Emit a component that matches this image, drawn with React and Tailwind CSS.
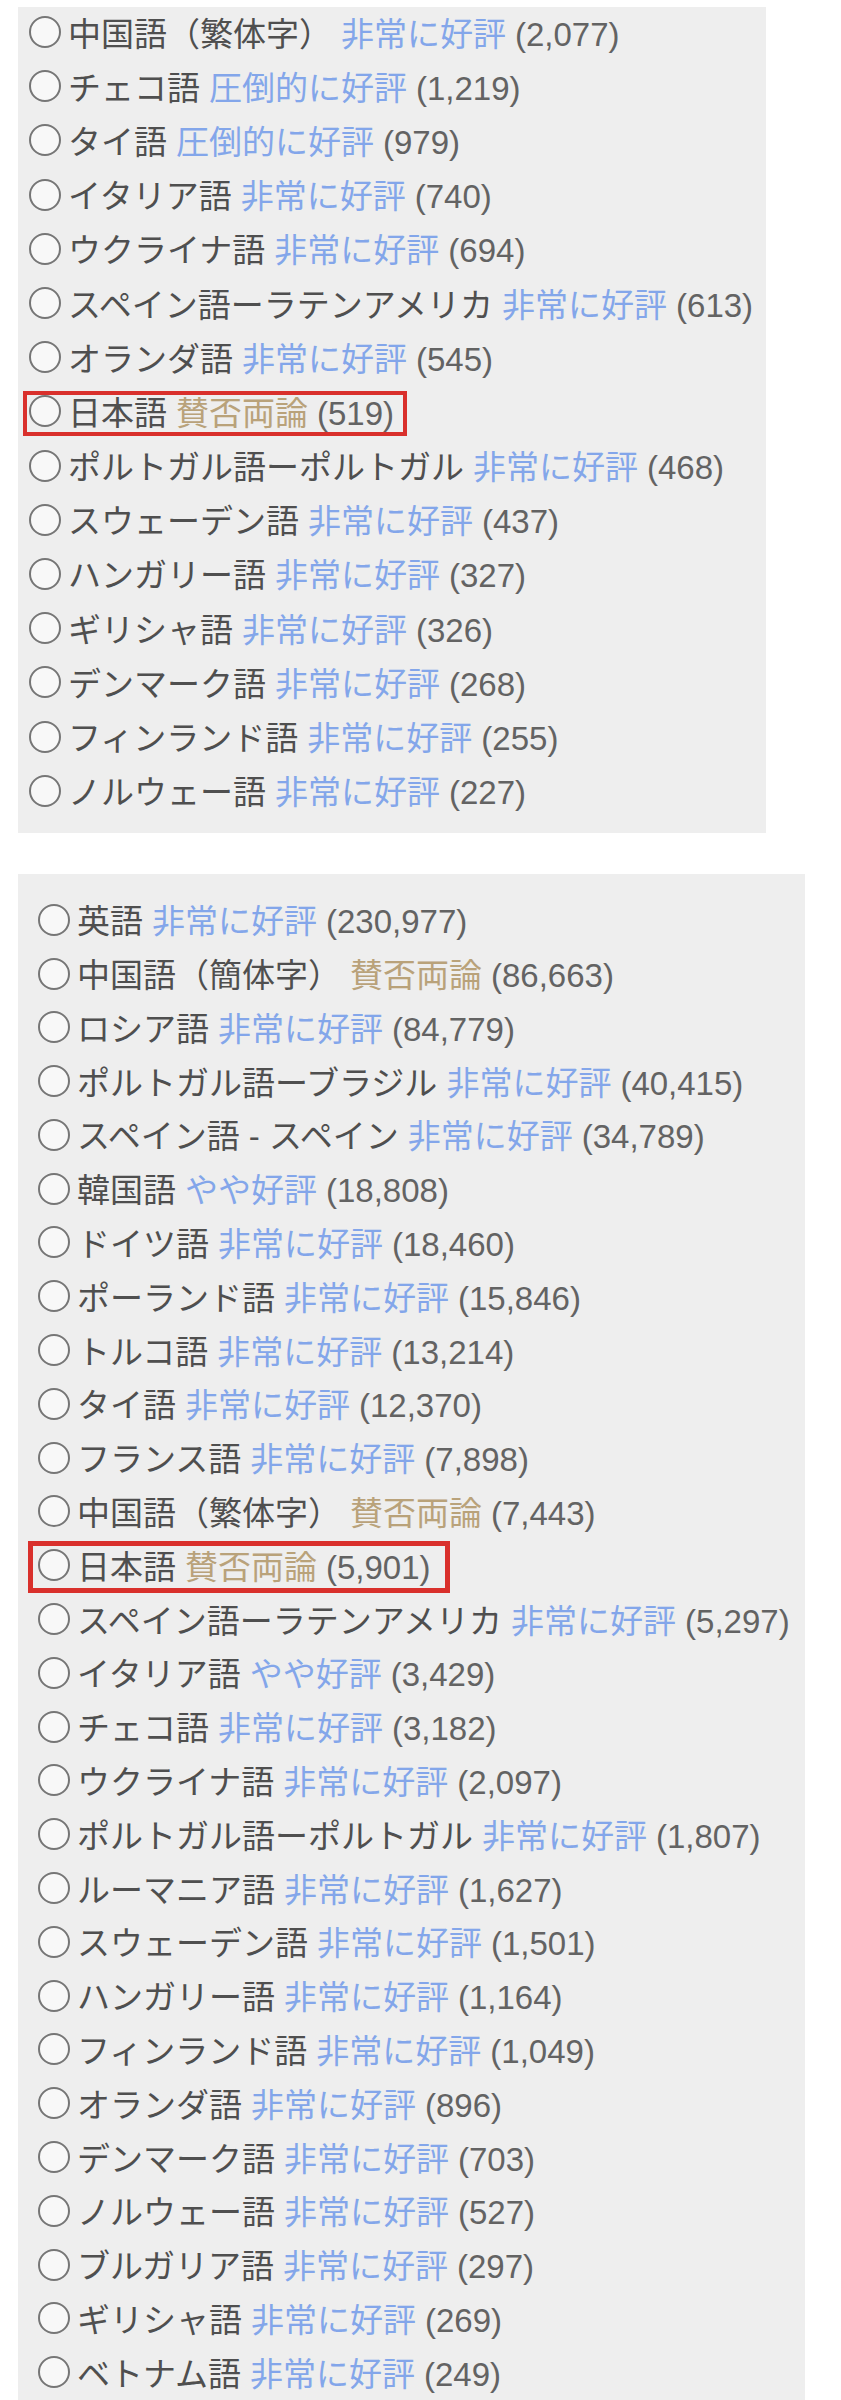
const BLUE = 'text-[#83a6ea]'
const MIXED = 'text-[#b9a27a]'

const topList = [
  ['中国語（繁体字）', '非常に好評', '2,077'],
  ['チェコ語', '圧倒的に好評', '1,219'],
  ['タイ語', '圧倒的に好評', '979'],
  ['イタリア語', '非常に好評', '740'],
  ['ウクライナ語', '非常に好評', '694'],
  ['スペイン語ーラテンアメリカ', '非常に好評', '613'],
  ['オランダ語', '非常に好評', '545'],
  ['日本語', '賛否両論', '519', true],
  ['ポルトガル語ーポルトガル', '非常に好評', '468'],
  ['スウェーデン語', '非常に好評', '437'],
  ['ハンガリー語', '非常に好評', '327'],
  ['ギリシャ語', '非常に好評', '326'],
  ['デンマーク語', '非常に好評', '268'],
  ['フィンランド語', '非常に好評', '255'],
  ['ノルウェー語', '非常に好評', '227'],
]

const bottomList = [
  ['英語', '非常に好評', '230,977'],
  ['中国語（簡体字）', '賛否両論', '86,663'],
  ['ロシア語', '非常に好評', '84,779'],
  ['ポルトガル語ーブラジル', '非常に好評', '40,415'],
  ['スペイン語 - スペイン', '非常に好評', '34,789'],
  ['韓国語', 'やや好評', '18,808'],
  ['ドイツ語', '非常に好評', '18,460'],
  ['ポーランド語', '非常に好評', '15,846'],
  ['トルコ語', '非常に好評', '13,214'],
  ['タイ語', '非常に好評', '12,370'],
  ['フランス語', '非常に好評', '7,898'],
  ['中国語（繁体字）', '賛否両論', '7,443'],
  ['日本語', '賛否両論', '5,901', true],
  ['スペイン語ーラテンアメリカ', '非常に好評', '5,297'],
  ['イタリア語', 'やや好評', '3,429'],
  ['チェコ語', '非常に好評', '3,182'],
  ['ウクライナ語', '非常に好評', '2,097'],
  ['ポルトガル語ーポルトガル', '非常に好評', '1,807'],
  ['ルーマニア語', '非常に好評', '1,627'],
  ['スウェーデン語', '非常に好評', '1,501'],
  ['ハンガリー語', '非常に好評', '1,164'],
  ['フィンランド語', '非常に好評', '1,049'],
  ['オランダ語', '非常に好評', '896'],
  ['デンマーク語', '非常に好評', '703'],
  ['ノルウェー語', '非常に好評', '527'],
  ['ブルガリア語', '非常に好評', '297'],
  ['ギリシャ語', '非常に好評', '269'],
  ['ベトナム語', '非常に好評', '249'],
]

function LangRow({ label, rating, count, marked, markClass, rowClass }) {
  const color = rating === '賛否両論' ? MIXED : BLUE
  return (
    <div className={`flex items-center ${rowClass}`}>
      <span className={`inline-flex items-center ${marked ? markClass : ''}`}>
        <span className="mr-[7px] h-[32px] w-[32px] shrink-0 -translate-y-[2px] rounded-full border-[2.5px] border-[#767676] bg-[#f8f8f8]" />
        <span className="text-[#4f4f4f]">{label}</span>
        <span className={`ml-[9px] ${color}`}>{rating}</span>
        <span className="ml-[9px] text-[#636363]">({count})</span>
      </span>
    </div>
  )
}

export default function App() {
  return (
    <div className="min-h-screen bg-white px-[18px] pt-[8px] font-['Liberation_Sans','Noto_Sans_CJK_JP',sans-serif] text-[33px] leading-none whitespace-nowrap">
      {/* first filter list (scrolled, top cut off) */}
      <div className="w-[748px] bg-[#eeeeee] pb-[13px] pl-[11px]">
        <div className="-mt-[1px]">
          {topList.map(([label, rating, count, marked]) => (
            <LangRow
              key={label}
              label={label}
              rating={rating}
              count={count}
              marked={marked}
              rowClass="h-[54.2px]"
              markClass="h-[33px] pr-[7px] outline-4 outline-offset-[2px] outline-[#d9302c]"
            />
          ))}
        </div>
      </div>

      {/* second filter list */}
      <div className="mt-[41px] w-[787px] bg-[#eeeeee] pb-[20px] pl-[20px] pt-[21px]">
        {bottomList.map(([label, rating, count, marked]) => (
          <LangRow
            key={label}
            label={label}
            rating={rating}
            count={count}
            marked={marked}
            rowClass="h-[53.8px]"
            markClass="-ml-[3px] h-[38px] pl-[3px] pr-[12px] outline-[5px] outline-offset-[2px] outline-[#d9302c]"
          />
        ))}
      </div>
    </div>
  )
}
